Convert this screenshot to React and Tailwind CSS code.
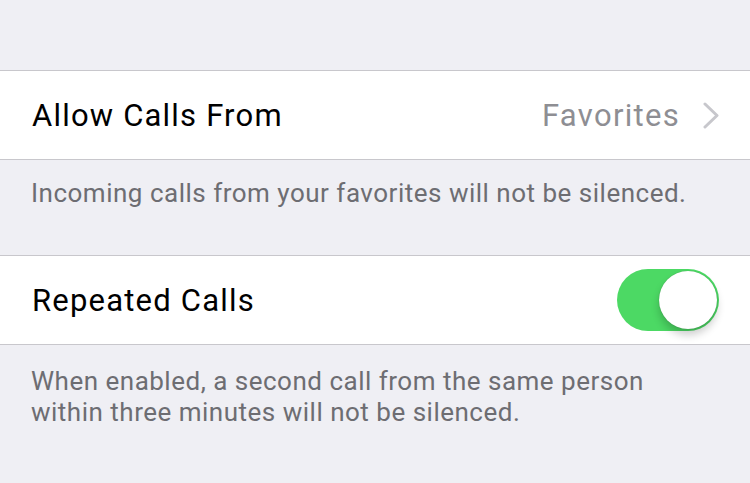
export default function App() {
  const font = { fontFamily: 'Roboto, "Noto Sans", sans-serif' };
  return (
    <div className="w-[750px] h-[483px] bg-[#efeff4] overflow-hidden" style={font}>
      <div className="h-[70px]" />
      <div className="bg-white border-y border-[#c8c7cc] h-[90px] flex items-center pl-[32px] pr-[31px]">
        <span className="text-[31px] tracking-[1.2px] text-black flex-1 leading-none">Allow Calls From</span>
        <span className="text-[31px] tracking-[1.3px] text-[#8e8e93] leading-none mr-[23px]">Favorites</span>
        <svg width="16" height="27" viewBox="0 0 16 27" fill="none">
          <path d="M2 2 L14 13.5 L2 25" stroke="#c7c7cc" strokeWidth="3" strokeLinecap="round" strokeLinejoin="round" />
        </svg>
      </div>
      <div className="h-[95px] pl-[31px] pt-[18px] text-[26px] tracking-[0.5px] text-[#6d6d72] leading-[31px]">
        Incoming calls from your favorites will not be silenced.
      </div>
      <div className="bg-white border-y border-[#c8c7cc] h-[90px] flex items-center pl-[32px] pr-[31px]">
        <span className="text-[31px] tracking-[1.2px] text-black flex-1 leading-none">Repeated Calls</span>
        <div className="relative w-[102px] h-[62px] rounded-full bg-[#4cd964]">
          <div className="absolute right-[2px] top-[2px] w-[58px] h-[58px] rounded-full bg-white shadow-[0_6px_8px_rgba(0,0,0,0.2),0_0_1px_rgba(0,0,0,0.3)]" />
        </div>
      </div>
      <div className="pl-[31px] pt-[21px] text-[26px] tracking-[0.5px] text-[#6d6d72] leading-[31px]">
        When enabled, a second call from the same person<br />within three minutes will not be silenced.
      </div>
    </div>
  );
}
